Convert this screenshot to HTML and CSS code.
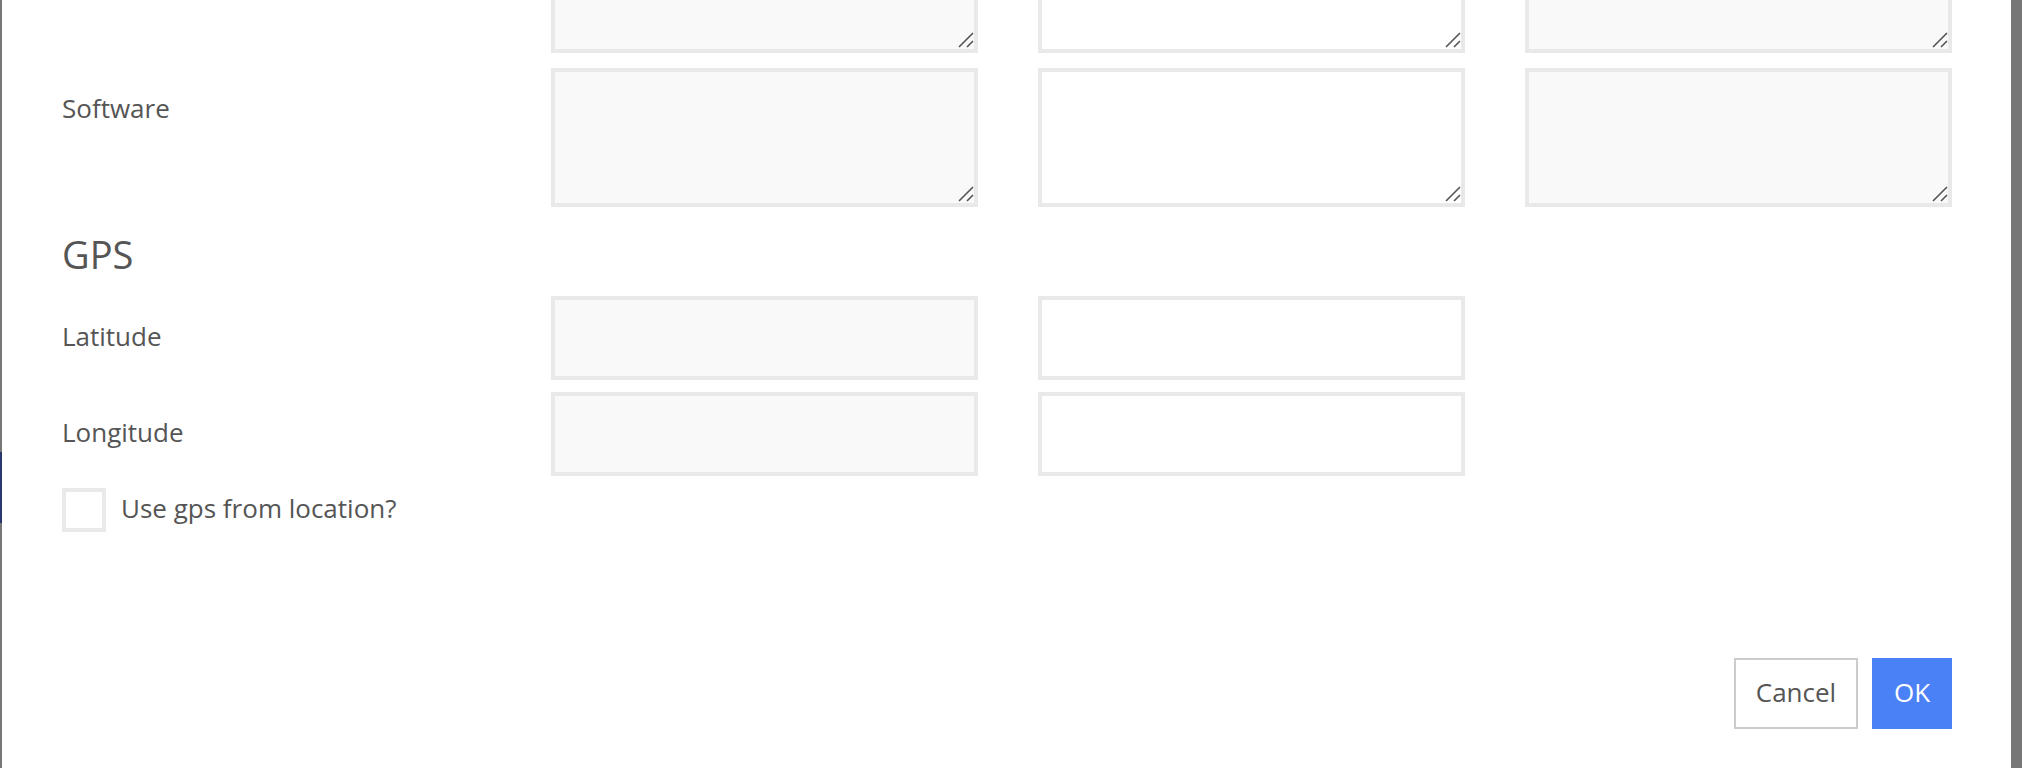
FILE: index.html
```html
<!DOCTYPE html>
<html lang="en">
  <head>
    <meta charset="UTF-8" />
    <meta name="viewport" content="width=device-width, initial-scale=1.0" />
    <title>Edit metadata</title>
    <link rel="stylesheet" href="styles.css">
  </head>

  <body>
    <div class="backdrop-edge">
      <div class="edge-block"></div>
    </div>

    <div class="modal">
      <div class="modal-body">
        <div class="row row-area row-first">
          <label class="label"></label>
          <div class="area-wrap">
            <textarea class="field locked" readonly></textarea>
            <svg class="grip" viewBox="0 0 16 16"><path d="M1 15L15 1M9 15L15 9" /></svg>
          </div>
          <div class="area-wrap">
            <textarea class="field"></textarea>
            <svg class="grip" viewBox="0 0 16 16"><path d="M1 15L15 1M9 15L15 9" /></svg>
          </div>
          <div class="area-wrap">
            <textarea class="field locked" readonly></textarea>
            <svg class="grip" viewBox="0 0 16 16"><path d="M1 15L15 1M9 15L15 9" /></svg>
          </div>
        </div>
        <div class="row row-area">
          <label class="label">Software</label>
          <div class="area-wrap">
            <textarea class="field locked" readonly></textarea>
            <svg class="grip" viewBox="0 0 16 16"><path d="M1 15L15 1M9 15L15 9" /></svg>
          </div>
          <div class="area-wrap">
            <textarea class="field"></textarea>
            <svg class="grip" viewBox="0 0 16 16"><path d="M1 15L15 1M9 15L15 9" /></svg>
          </div>
          <div class="area-wrap">
            <textarea class="field locked" readonly></textarea>
            <svg class="grip" viewBox="0 0 16 16"><path d="M1 15L15 1M9 15L15 9" /></svg>
          </div>
        </div>

        <h3 class="section-title">GPS</h3>

        <div class="row row-input">
          <label class="label">Latitude</label>
          <input type="text" class="field locked" readonly />
          <input type="text" class="field" />
        </div>
        <div class="row row-input">
          <label class="label">Longitude</label>
          <input type="text" class="field locked" readonly />
          <input type="text" class="field" />
        </div>

        <label class="check">
          <input type="checkbox" name="useLocationGps" />
          <span>Use gps from location?</span>
        </label>
      </div>

      <div class="modal-footer">
        <button class="btn btn-cancel">Cancel</button>
        <button class="btn btn-ok">OK</button>
      </div>
    </div>
  </body>
</html>
```

FILE: styles.css
```css
body {
  margin: 0;
  height: 768px;
  display: flex;
  overflow: hidden;
  background-color: #777;
  font-family: "Open Sans", "Noto Sans", sans-serif;
  color: #555;
}

.backdrop-edge {
  flex: none;
  width: 2px;
}

.edge-block {
  margin-top: 452px;
  height: 71px;
  background-color: #28376e;
}

.modal {
  flex: 1;
  margin-right: 11px;
  padding: 0 59px 0 60px;
  background-color: #fff;
  display: flex;
  flex-direction: column;
  overflow: hidden;
}

.row {
  display: grid;
  grid-template-columns: 429px repeat(3, 427px);
  column-gap: 60px;
}

.row-first {
  margin-top: -86px;
}

.row-area {
  margin-bottom: 15px;
}

.row-input {
  margin-bottom: 12px;
}

.label {
  padding-top: 22px;
  font-size: 26px;
  line-height: 36px;
}

.field {
  box-sizing: border-box;
  margin: 0;
  border: 4px solid #e9e9e9;
  border-radius: 0;
  background-color: #fff;
  outline: none;
  font-family: inherit;
  font-size: 26px;
  color: #555;
}

.area-wrap {
  position: relative;
  height: 139px;
}

.area-wrap .field {
  display: block;
  width: 100%;
  height: 139px;
  resize: none;
}

.grip {
  position: absolute;
  right: 4px;
  bottom: 5px;
  width: 16px;
  height: 16px;
  fill: none;
  stroke: #555;
  stroke-width: 1.6;
}

.row-input .field {
  height: 84px;
}

.field.locked {
  background-color: #f9f9f9;
}

.section-title {
  margin: 24px 0 19px;
  font-size: 38px;
  font-weight: normal;
  line-height: 46px;
}

.check {
  display: flex;
  align-items: center;
  gap: 15px;
  font-size: 26px;
  line-height: 36px;
}

.check input {
  appearance: none;
  box-sizing: border-box;
  width: 44px;
  height: 44px;
  margin: 0;
  border: 4px solid #e9e9e9;
  background-color: #fff;
}

.check span {
  margin-top: -4px;
}

.modal-footer {
  margin-top: 126px;
  display: flex;
  justify-content: flex-end;
  gap: 14px;
}

.btn {
  box-sizing: border-box;
  height: 71px;
  padding: 0 0 4px;
  border-radius: 0;
  font-family: inherit;
  font-size: 26px;
  cursor: pointer;
}

.btn-cancel {
  width: 124px;
  border: 2px solid #ccc;
  background-color: #fff;
  color: #555;
}

.btn-ok {
  width: 80px;
  border: 0;
  background-color: #4b81f6;
  color: #fff;
}
```
